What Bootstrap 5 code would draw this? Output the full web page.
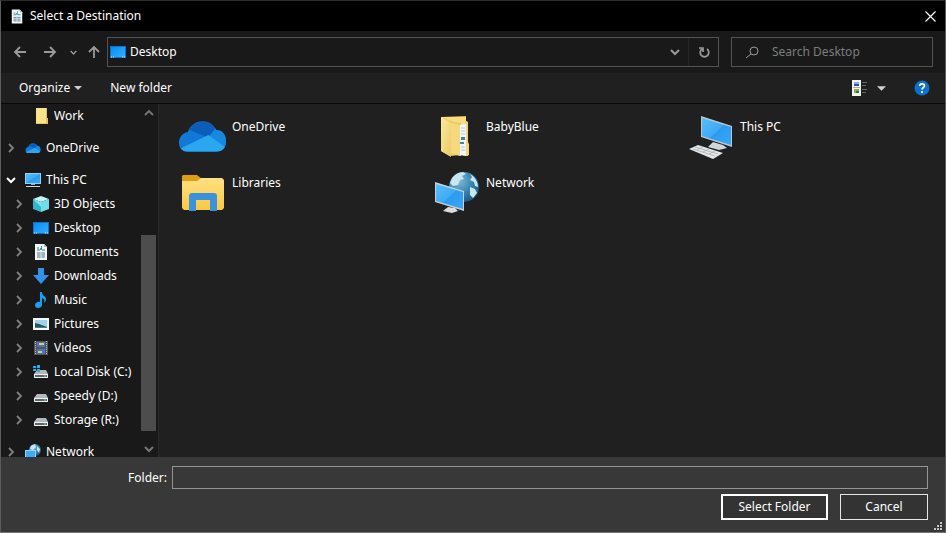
<!DOCTYPE html>
<html lang="en" data-bs-theme="dark">
<head>
<meta charset="utf-8">
<meta name="viewport" content="width=device-width, initial-scale=1">
<title>Select a Destination</title>
<link href="https://cdn.jsdelivr.net/npm/bootstrap@5.3.0/dist/css/bootstrap.min.css" rel="stylesheet">
<style>
  body { font-family: "Noto Sans", "Open Sans", sans-serif; font-size: 12px; line-height: 16px; color: #fff; background: #191919; }
  svg { display: block; flex: none; }
  button { color: inherit; font-size: 12px; line-height: 16px; }
  .plain { background: none; border: 0; padding: 0; }
  .dialog { border: 1px solid #5c5c5c; border-top-color: #2c2c2c; border-bottom-color: #747474; }
  .titlebar { height: 30px; background: #000; padding: 0 9px; gap: 6px; }
  .heading { font-size: 12px; line-height: 16px; font-weight: 400; margin: 0; }
  .navrow { height: 42px; background: #191919; padding: 0 12px; color: #9a9a9a; }
  .recent { margin: 0 10px 0 13px; }
  .address { height: 30px; border: 1px solid #535353; margin-left: 6px; padding-left: 2px; }
  .refresh { width: 30px; border-left: 1px solid #252525; }
  .search { width: 202px; height: 30px; border: 1px solid #535353; margin-left: 12px; padding-left: 14px; }
  .search input { background: none; border: 0; outline: 0; color: #fff; min-width: 0; font-size: 12px; padding: 0; margin-left: 13px; }
  .search input::placeholder { color: #7d7d7d; opacity: 1; }
  .toolbar { height: 31px; background: #202020; padding: 0 15px 0 18px; border-bottom: 1px solid #0c0606; }
  .view { gap: 9px; }
  .middle { flex: 1 1 0; min-height: 0; }
  .sidebar { width: 158px; background: #191919; border-right: 1px solid #292929; }
  .tree a { color: #fff; text-decoration: none; }
  .tree ul { margin: 0; padding: 0; list-style: none; }
  .branch { margin-bottom: 8px; }
  .node { height: 24px; padding-left: 2px; white-space: nowrap; }
  .node a { gap: 5px; }
  .twist { width: 16px; height: 16px; margin-right: 6px; color: #808080; flex: none; }
  .twist svg { margin: 0 auto; }
  .sub .node { padding-left: 10px; }
  .scroll { width: 15px; color: #777; margin-right: 2px; }
  .scroll button { height: 17px; width: 15px; }
  .scroll svg { margin: 0 auto; }
  .before { flex: 114 1 0; }
  .thumb { flex: 196 1 0; background: #4d4d4d; }
  .after { flex: 9 1 0; }
  .files { background: #202020; padding: 4px 0 0 19px; display: grid; grid-template-columns: repeat(auto-fill, minmax(240px, 254px)); grid-auto-rows: 56px; }
  .tile { color: #fff; text-decoration: none; padding: 4px 0; gap: 5px; }
  .tile span { padding-top: 7px; }
  .bottom { background: #383838; padding: 9px 17px 12px; position: relative; }
  .folder-label { width: 154px; text-align: right; padding-right: 5px; }
  .folder-input { height: 23px; background: #383838; border: 1px solid #949494; color: #fff; min-width: 0; }
  .actions { margin-top: 5px; gap: 12px; }
  .action { height: 26px; background: #333; border: 1px solid #e6e6e6; border-radius: 0; padding: 0; }
  .ok { width: 107px; border: 2px solid #fff; }
  .cancel { width: 88px; }
  .grip { position: absolute; right: 3px; bottom: 2px; }
</style>
<script src="https://cdn.jsdelivr.net/npm/bootstrap@5.3.0/dist/js/bootstrap.bundle.min.js"></script>
</head>
<body class="m-0">
<svg width="0" height="0" class="position-absolute" aria-hidden="true">
  <defs>
    <linearGradient id="gScreen" x1="0" y1="0" x2="1" y2="1"><stop offset="0" stop-color="#59bdfb"/><stop offset=".5" stop-color="#3eaaf6"/><stop offset=".51" stop-color="#2c9bee"/><stop offset="1" stop-color="#3aa8f6"/></linearGradient>
    <linearGradient id="gDesk" x1="0" y1="0" x2="1" y2="1"><stop offset="0" stop-color="#0b8cf0"/><stop offset="1" stop-color="#30b0ff"/></linearGradient>
    <linearGradient id="gFold" x1="0" y1="0" x2="0" y2="1"><stop offset="0" stop-color="#ffe184"/><stop offset="1" stop-color="#fbc843"/></linearGradient>
    <linearGradient id="gPaper" x1="0" y1="0" x2="1" y2="1"><stop offset="0" stop-color="#fbe9a2"/><stop offset="1" stop-color="#ecca61"/></linearGradient>
    <radialGradient id="gGlobe" cx=".35" cy=".3" r=".75"><stop offset="0" stop-color="#7cbbd9"/><stop offset=".6" stop-color="#3581ab"/><stop offset="1" stop-color="#1a5b83"/></radialGradient>
    <clipPath id="cCloud"><path d="M10 40C4 40 1 36 1 31c0-6 4-10 9-11 2-6 8-11 15-11 6 0 11 3 14 9 6 0 10 5 10 11 0 7-4 11-10 11z"/></clipPath>
  </defs>
  <symbol id="right" viewBox="0 0 10 10"><path d="M3 1l4 4-4 4" fill="none" stroke="currentColor" stroke-width="1.8"/></symbol>
  <symbol id="down" viewBox="0 0 10 10"><path d="M1 3l4 4 4-4" fill="none" stroke="currentColor" stroke-width="2"/></symbol>
  <symbol id="up" viewBox="0 0 10 10"><path d="M1 7l4-4 4 4" fill="none" stroke="currentColor" stroke-width="1.8"/></symbol>
  <symbol id="caret" viewBox="0 0 8 4"><path d="M0 0h8L4 4z" fill="#d0d0d0"/></symbol>
  <symbol id="cloud" viewBox="0 0 50 48"><g clip-path="url(#cCloud)"><path fill="#1078d6" d="M0 0h50v48H0z"/><path fill="#0a5eb8" d="M14 0h28v17l-8 10-22-9z"/><path fill="#1688e0" d="M31 25l8-10h12v26z"/><path fill="#2ba6f0" d="M2 37l29-14 18 13v5H2z"/></g></symbol>
  <symbol id="doc" viewBox="0 0 16 16"><path d="M2 0h9l3 3v13H2z" fill="#f4f8fa"/><path d="M11 0v3h3z" fill="#a9bdc7"/><path d="M4 4h2M4 6h3M4 9h8M4 11h8M4 13h8M9 6h3" stroke="#4d7189" fill="none"/><path d="M8 2h1v4H7V4h1z" fill="#2ba0bf"/><path d="M8 8v6" stroke="#d9e5eb"/></symbol>
  <symbol id="desk" viewBox="0 0 16 12"><path fill="#0875d3" d="M0 0h16v12H0z"/><path fill="url(#gDesk)" d="M1 1h14v10H1z"/><path d="M1 11h1M3 11h1M12 11h1M14 11h1" stroke="#d5efff"/></symbol>
  <symbol id="pc" viewBox="0 0 16 16"><path fill="#8fd0f8" d="M0 1h16v11H0z"/><path fill="url(#gScreen)" d="M1 2h14v9H1z"/><path fill="#9fb0b9" d="M6 12h4v1H6z"/><path fill="#cfd8dc" d="M1 14h14v1H1z"/></symbol>
  <symbol id="cube" viewBox="0 0 16 16"><path d="M8 0l8 3-8 3-8-3z" fill="#c6f3f7"/><path d="M0 3l8 3v10l-8-3z" fill="#2fb7d0"/><path d="M16 3L8 6v10l8-3z" fill="#70dde9"/><path d="M0 3l8 3v5z" fill="#81e1ed"/></symbol>
  <symbol id="drive" viewBox="0 0 16 16"><path d="M4 6h9l2 4H1z" fill="#b5b8ba"/><path d="M1 10h14v4H1z" fill="#eceeef"/><path d="M2 11h12v2H2z" fill="#606468"/><path d="M11 12h2" stroke="#68ef84"/></symbol>
  <symbol id="net" viewBox="0 0 48 48"><circle cx="29" cy="19" r="15" fill="url(#gGlobe)"/><path d="M17 10c3-4 7-6 11-6l3 2-4 2 2 3-4 1-2 5-5 1-3-3zM35 6c5 3 8 8 8 13l-3-1-1-4-4-2 2-3zM35 19l5 2 2 4-4 5-3-3z" fill="#c8e6f0"/><path d="M0 14l29 9v20L0 34z" fill="#c6d0d6"/><path d="M1 16l27 8v17L1 33z" fill="url(#gScreen)"/><path d="M13 39l7 1 3 3-6 2-9-2z" fill="#d8dde0"/></symbol>
</svg>

<main class="dialog vh-100 d-flex flex-column overflow-hidden">
  <header class="titlebar d-flex align-items-center flex-shrink-0">
    <svg width="14" height="15"><use href="#doc"/></svg>
    <h1 class="heading flex-grow-1">Select a Destination</h1>
    <button class="plain" aria-label="Close"><svg width="11" height="11" viewBox="0 0 11 11"><path d="M.5.5l10 10M10.5.5l-10 10" stroke="#fff" stroke-width="1.2"/></svg></button>
  </header>

  <nav class="navrow d-flex align-items-center flex-shrink-0" aria-label="Location">
    <button class="plain" aria-label="Back"><svg width="14" height="14" viewBox="0 0 14 14" fill="none" stroke="currentColor" stroke-width="1.8"><path d="M13 7H2M7 2L2 7l5 5"/></svg></button>
    <button class="plain ms-3" aria-label="Forward"><svg width="14" height="14" viewBox="0 0 14 14" fill="none" stroke="currentColor" stroke-width="1.8"><path d="M1 7h11M7 2l5 5-5 5"/></svg></button>
    <button class="plain recent" aria-label="Recent locations"><svg width="7" height="7"><use href="#down"/></svg></button>
    <button class="plain" aria-label="Up"><svg width="14" height="14" viewBox="0 0 14 14" fill="none" stroke="currentColor" stroke-width="1.8"><path d="M7 13V2M2 7l5-5 5 5"/></svg></button>
    <div class="address d-flex align-items-center flex-grow-1">
      <svg width="16" height="12"><use href="#desk"/></svg>
      <span class="text-white ms-1 flex-grow-1">Desktop</span>
      <button class="plain me-2" aria-label="Previous locations"><svg width="10" height="10"><use href="#down"/></svg></button>
      <button class="plain refresh align-self-stretch d-flex align-items-center justify-content-center" aria-label="Refresh"><svg width="12" height="12" viewBox="0 0 12 12" fill="none" stroke="currentColor" stroke-width="1.7"><path d="M9 3a4.300 4.300 0 1 1-5 0M1 2h4v4"/></svg></button>
    </div>
    <div class="search d-flex align-items-center">
      <svg width="13" height="13" viewBox="0 0 13 13" fill="none" stroke="currentColor"><circle cx="8" cy="5" r="4"/><path d="M5 8l-5 4"/></svg>
      <input type="search" class="flex-grow-1" placeholder="Search Desktop" aria-label="Search Desktop">
    </div>
  </nav>

  <div class="toolbar d-flex align-items-center flex-shrink-0">
    <button class="plain d-flex align-items-center gap-1">Organize <svg width="8" height="4"><use href="#caret"/></svg></button>
    <button class="plain ms-4 ps-1">New folder</button>
    <button class="plain view ms-auto d-flex align-items-center" aria-label="Change your view">
      <svg width="16" height="16" viewBox="0 0 16 16"><path fill="#f4f4f0" d="M0 0h9v16H0z"/><path fill="#87aee8" d="M2 2h5v4H2z"/><path fill="#33579b" d="M2 4h5v2H2z"/><path fill="#8aae54" d="M2 9h5v4H2z"/><path fill="#416f31" d="M4 11h3v2H4z"/><path d="M1 7.500h7" stroke="#aaa"/><path d="M10 2.500h5M10 5.500h4M10 9.500h5M10 12.500h4" stroke="#666"/></svg>
      <svg width="9" height="5"><use href="#caret"/></svg>
    </button>
    <button class="plain ms-4 ps-1" aria-label="Help"><svg width="16" height="16" viewBox="0 0 16 16"><circle cx="8" cy="8" r="7.500" fill="#0b70d0"/><path d="M5.700 6C5.700 3 10.500 3.200 10.500 5.800 10.500 7.500 8 7.600 8 9.600M8 11v2" fill="none" stroke="#fff" stroke-width="1.7"/></svg></button>
  </div>

  <div class="middle d-flex">
    <aside class="sidebar d-flex flex-shrink-0 overflow-hidden">
      <nav class="tree flex-grow-1 overflow-hidden" aria-label="Folders">
        <ul>
          <li class="branch sub"><div class="node d-flex align-items-center"><span class="twist"></span><a href="#" class="d-flex align-items-center"><svg width="16" height="16" viewBox="0 0 16 16"><path d="M3 0h11v10h1v6H3z" fill="#e7c358"/><path d="M3 0h10v15H3z" fill="#fce48d"/></svg>Work</a></div></li>
          <li class="branch"><div class="node d-flex align-items-center"><button class="plain twist" aria-label="Expand OneDrive"><svg width="10" height="10"><use href="#right"/></svg></button><a href="#" class="d-flex align-items-center"><svg width="16" height="16"><use href="#cloud"/></svg>OneDrive</a></div></li>
          <li class="branch"><div class="node d-flex align-items-center"><button class="plain twist text-white" aria-label="Collapse This PC"><svg width="10" height="10"><use href="#down"/></svg></button><a href="#" class="d-flex align-items-center"><svg width="16" height="16"><use href="#pc"/></svg>This PC</a></div>
            <ul class="sub">
              <li class="node d-flex align-items-center"><button class="plain twist" aria-label="Expand 3D Objects"><svg width="10" height="10"><use href="#right"/></svg></button><a href="#" class="d-flex align-items-center"><svg width="16" height="16"><use href="#cube"/></svg>3D Objects</a></li>
              <li class="node d-flex align-items-center"><button class="plain twist" aria-label="Expand Desktop"><svg width="10" height="10"><use href="#right"/></svg></button><a href="#" class="d-flex align-items-center"><svg width="16" height="12"><use href="#desk"/></svg>Desktop</a></li>
              <li class="node d-flex align-items-center"><button class="plain twist" aria-label="Expand Documents"><svg width="10" height="10"><use href="#right"/></svg></button><a href="#" class="d-flex align-items-center"><svg width="16" height="16"><use href="#doc"/></svg>Documents</a></li>
              <li class="node d-flex align-items-center"><button class="plain twist" aria-label="Expand Downloads"><svg width="10" height="10"><use href="#right"/></svg></button><a href="#" class="d-flex align-items-center"><svg width="16" height="16" viewBox="0 0 16 16"><path d="M5 0h6v7h5l-8 9-8-9h5z" fill="#3490e8"/></svg>Downloads</a></li>
              <li class="node d-flex align-items-center"><button class="plain twist" aria-label="Expand Music"><svg width="10" height="10"><use href="#right"/></svg></button><a href="#" class="d-flex align-items-center"><svg width="16" height="16" viewBox="0 0 16 16"><path d="M7 0h2c0 4 4 4 4 7 0 2-1 3-2 4 1-3 0-4-2-5v7c0 2-2 3-4 3s-3-1-3-3 3-4 5-3z" fill="#19a0f0"/></svg>Music</a></li>
              <li class="node d-flex align-items-center"><button class="plain twist" aria-label="Expand Pictures"><svg width="10" height="10"><use href="#right"/></svg></button><a href="#" class="d-flex align-items-center"><svg width="16" height="12" viewBox="0 0 16 12"><path fill="#f6f8f9" d="M0 0h16v12H0z"/><path fill="#9fd2f2" d="M2 2h12v8H2z"/><path fill="#275a51" d="M2 5l4 1 8 3v1H2z"/><path fill="#4679a0" d="M2 9h12v1H2z"/></svg>Pictures</a></li>
              <li class="node d-flex align-items-center"><button class="plain twist" aria-label="Expand Videos"><svg width="10" height="10"><use href="#right"/></svg></button><a href="#" class="d-flex align-items-center"><svg width="16" height="16" viewBox="0 0 16 16"><path fill="#555" d="M1 1h14v14H1z"/><path d="M2.500 1v14M13.500 1v14" stroke="#b9b9b9" stroke-dasharray="1 1"/><path fill="#4476cc" d="M4 2h8v5H4zM4 9h8v5H4z"/><path fill="#edc75a" d="M6 3h5v2H6zM5 11h4v2H5z"/></svg>Videos</a></li>
              <li class="node d-flex align-items-center"><button class="plain twist" aria-label="Expand Local Disk (C:)"><svg width="10" height="10"><use href="#right"/></svg></button><a href="#" class="d-flex align-items-center"><svg width="16" height="16" viewBox="0 0 16 16"><use href="#drive"/><path d="M0 2h3v2H0zM4 1h3v3H4zM0 5h3v2H0zM4 5h3v3H4z" fill="#1fb1ea"/></svg>Local Disk (C:)</a></li>
              <li class="node d-flex align-items-center"><button class="plain twist" aria-label="Expand Speedy (D:)"><svg width="10" height="10"><use href="#right"/></svg></button><a href="#" class="d-flex align-items-center"><svg width="16" height="16"><use href="#drive"/></svg>Speedy (D:)</a></li>
              <li class="node d-flex align-items-center"><button class="plain twist" aria-label="Expand Storage (R:)"><svg width="10" height="10"><use href="#right"/></svg></button><a href="#" class="d-flex align-items-center"><svg width="16" height="16"><use href="#drive"/></svg>Storage (R:)</a></li>
            </ul>
          </li>
          <li><div class="node d-flex align-items-center"><button class="plain twist" aria-label="Expand Network"><svg width="10" height="10"><use href="#right"/></svg></button><a href="#" class="d-flex align-items-center"><svg width="16" height="16" viewBox="0 0 16 16"><circle cx="10" cy="6" r="6" fill="url(#gGlobe)"/><path d="M6 2l4-2 1 3-3 3-3-1zM12 2l3 3-1 4-2-3z" fill="#c8e6f0"/><path d="M0 6h11v8H0z" fill="#9bd3f8"/><path d="M1 7h9v6H1z" fill="#3eaaf6"/></svg>Network</a></div></li>
        </ul>
      </nav>
      <div class="scroll d-flex flex-column flex-shrink-0">
        <button class="plain" aria-label="Scroll up"><svg width="10" height="10"><use href="#up"/></svg></button>
        <div class="before"></div><div class="thumb"></div><div class="after"></div>
        <button class="plain" aria-label="Scroll down"><svg width="10" height="10"><use href="#down"/></svg></button>
      </div>
    </aside>

    <section class="files flex-grow-1 align-content-start" aria-label="Desktop contents">
      <a href="#" class="tile d-flex"><svg width="49" height="48"><use href="#cloud"/></svg><span>OneDrive</span></a>
      <a href="#" class="tile d-flex"><svg width="49" height="48" viewBox="0 0 49 48"><path d="M9 5l25-1v32l3-6v13H19z" fill="#dfb94c"/><path d="M10 5h24v32H10z" fill="#f6dc83"/><path d="M15 9l14 2v33l-14-4z" fill="#e9c861"/><path d="M34 31l3 1v11l-3 1z" fill="#f1d576"/><path d="M33 8l3 2v34h-3z" fill="#f1d576"/><path d="M27 13l7-1v32l-7-1z" fill="#f5f7f7"/><path d="M29 16h4M29 19h4M29 22h4M29 35h4M29 38h4" stroke="#b6c8cf"/><path d="M29 25h4v3h-4zM28 30h4v2h-4z" fill="#3f88b0"/><path d="M9 5l19 7v31l-10 1-9-5z" fill="#edcd68"/><path d="M9 5l10 6v34l-10-6z" fill="url(#gPaper)"/><path d="M19 11l9 2v31l-9-3z" fill="#f4d97e"/></svg><span>BabyBlue</span></a>
      <a href="#" class="tile d-flex"><svg width="49" height="48" viewBox="-2 0 49 48"><path d="M13 4l31 10v21L13 25z" fill="#b8c8d2"/><path d="M14 6l29 9v18L14 24z" fill="url(#gScreen)"/><path d="M25 30l10 3 4 3-8 2-11-3z" fill="#cfd5d8"/><path d="M10 33l25 8-10 6L1 37z" fill="#e3e6e8"/><path d="M5 37l22 7M7 35l23 7M9 38l6-3M15 40l6-3M21 42l6-3" stroke="#a9aeb1" fill="none" stroke-width=".8"/></svg><span>This PC</span></a>
      <a href="#" class="tile d-flex"><svg width="49" height="48" viewBox="0 0 49 48"><path d="M4 8l1-1h14l5 4v8H4z" fill="#df9c14"/><path d="M4 13h15l4-3h21l2 2v28l-2 2H6l-2-2z" fill="url(#gFold)"/><path d="M11 43V28q0-3 3-3h22q3 0 3 3v15h-7V32H18v11z" fill="#3992db"/></svg><span>Libraries</span></a>
      <a href="#" class="tile d-flex"><svg width="49" height="48" viewBox="-3 0 49 48"><use href="#net" width="48" height="48"/></svg><span>Network</span></a>
    </section>
  </div>

  <footer class="bottom flex-shrink-0">
    <div class="d-flex align-items-center">
      <label for="folder" class="folder-label flex-shrink-0">Folder:</label>
      <input id="folder" type="text" class="folder-input flex-grow-1">
    </div>
    <div class="actions d-flex justify-content-end">
      <button class="action ok">Select Folder</button>
      <button class="action cancel">Cancel</button>
    </div>
    <svg class="grip" width="8" height="8" viewBox="0 0 8 8" fill="#c4c4c4"><path d="M6 0h2v2H6zM3 3h2v2H3zM6 3h2v2H6zM0 6h2v2H0zM3 6h2v2H3zM6 6h2v2H6z"/></svg>
  </footer>
</main>
</body>
</html>
